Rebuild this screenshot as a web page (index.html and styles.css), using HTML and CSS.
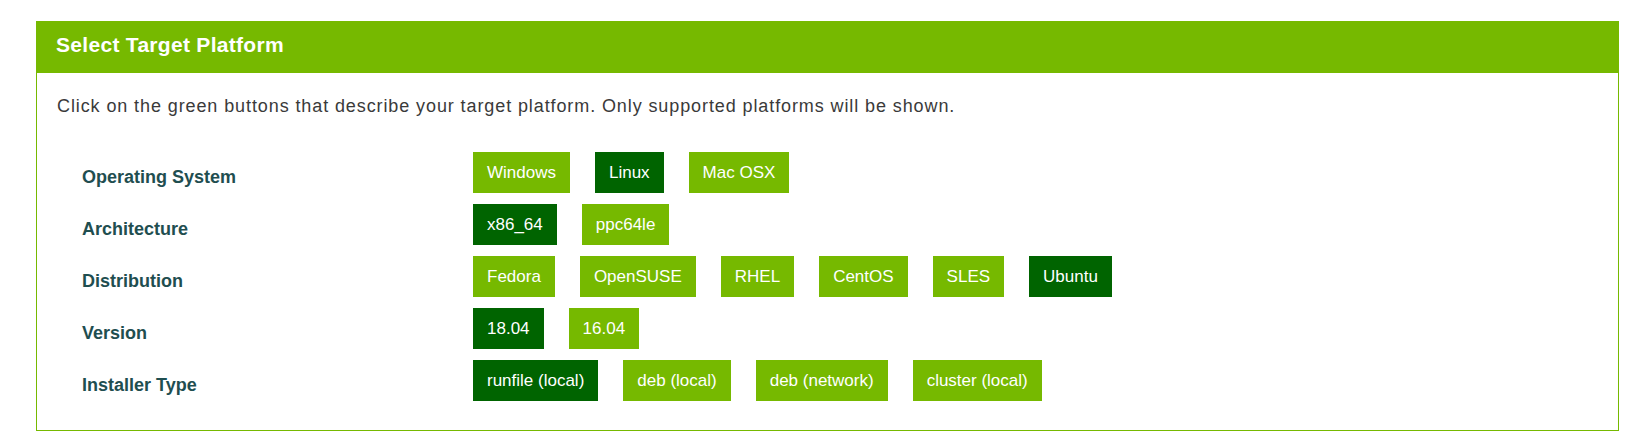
FILE: index.html
```html
<!DOCTYPE html>
<html lang="en">
<head>
<meta charset="utf-8">
<title>Select Target Platform</title>
<link rel="stylesheet" href="styles.css">
</head>
<body>
<section class="panel">
  <header class="panel-head">
    <h2 class="panel-title">Select Target Platform</h2>
  </header>
  <div class="panel-body">
    <p class="intro">Click on the green buttons that describe your target platform. Only supported platforms will be shown.</p>
    <div class="selector">
      <div class="row-label">Operating System</div>
      <div class="options">
        <span class="opt">Windows</span>
        <span class="opt on">Linux</span>
        <span class="opt">Mac OSX</span>
      </div>
      <div class="row-label">Architecture</div>
      <div class="options">
        <span class="opt on">x86_64</span>
        <span class="opt">ppc64le</span>
      </div>
      <div class="row-label">Distribution</div>
      <div class="options">
        <span class="opt">Fedora</span>
        <span class="opt">OpenSUSE</span>
        <span class="opt">RHEL</span>
        <span class="opt">CentOS</span>
        <span class="opt">SLES</span>
        <span class="opt on">Ubuntu</span>
      </div>
      <div class="row-label">Version</div>
      <div class="options">
        <span class="opt on">18.04</span>
        <span class="opt">16.04</span>
      </div>
      <div class="row-label">Installer Type</div>
      <div class="options">
        <span class="opt on">runfile (local)</span>
        <span class="opt">deb (local)</span>
        <span class="opt">deb (network)</span>
        <span class="opt">cluster (local)</span>
      </div>
    </div>
  </div>
</section>
</body>
</html>
```
FILE: styles.css
```css
html, body {
  margin: 0;
  padding: 0;
  background: #ffffff;
}

body {
  font-family: "Liberation Sans", Arial, sans-serif;
  padding: 21px 20px 0 36px;
}

.panel {
  border: 1px solid #76b900;
  background: #ffffff;
}

.panel-head {
  background: #76b900;
  height: 51px;
  display: flex;
  align-items: center;
  padding: 0 0 5px 19px;
  box-sizing: border-box;
}

.panel-title {
  margin: 0;
  color: #ffffff;
  font-size: 21px;
  font-weight: bold;
  line-height: 24px;
  letter-spacing: 0.3px;
}

.panel-body {
  padding: 21px 20px 29px 20px;
}

.intro {
  margin: 0 0 34px 0;
  font-size: 18px;
  line-height: 24px;
  letter-spacing: 0.9px;
  color: #3a3a3a;
}

.selector {
  display: grid;
  grid-template-columns: 391px 1fr;
  row-gap: 11px;
  margin-left: 25px;
}

.row-label {
  align-self: center;
  padding-top: 8px;
  font-size: 18px;
  font-weight: bold;
  line-height: 22px;
  color: #1f4e50;
}

.options {
  display: flex;
  gap: 25px;
}

.opt {
  display: flex;
  align-items: center;
  height: 41px;
  padding: 0 14px;
  background: #76b900;
  color: #ffffff;
  font-size: 17px;
  white-space: nowrap;
}

.opt.on {
  background: #006400;
}
```
